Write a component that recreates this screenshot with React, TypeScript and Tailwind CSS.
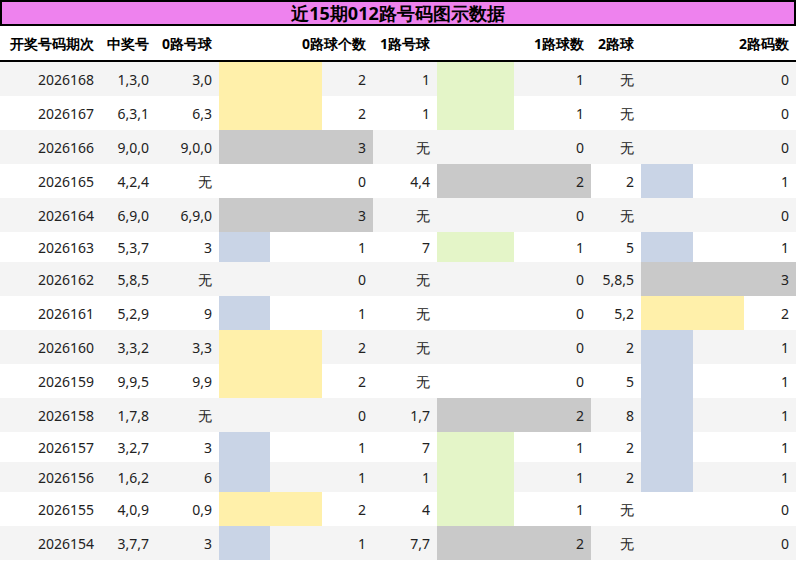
const rows: [string, string, string, number, string, number, string, number][] = [
  ["2026168", "1,3,0", "3,0", 2, "1", 1, "无", 0],
  ["2026167", "6,3,1", "6,3", 2, "1", 1, "无", 0],
  ["2026166", "9,0,0", "9,0,0", 3, "无", 0, "无", 0],
  ["2026165", "4,2,4", "无", 0, "4,4", 2, "2", 1],
  ["2026164", "6,9,0", "6,9,0", 3, "无", 0, "无", 0],
  ["2026163", "5,3,7", "3", 1, "7", 1, "5", 1],
  ["2026162", "5,8,5", "无", 0, "无", 0, "5,8,5", 3],
  ["2026161", "5,2,9", "9", 1, "无", 0, "5,2", 2],
  ["2026160", "3,3,2", "3,3", 2, "无", 0, "2", 1],
  ["2026159", "9,9,5", "9,9", 2, "无", 0, "5", 1],
  ["2026158", "1,7,8", "无", 0, "1,7", 2, "8", 1],
  ["2026157", "3,2,7", "3", 1, "7", 1, "2", 1],
  ["2026156", "1,6,2", "6", 1, "1", 1, "2", 1],
  ["2026155", "4,0,9", "0,9", 2, "4", 1, "无", 0],
  ["2026154", "3,7,7", "3", 1, "7,7", 2, "无", 0],
];

const colors0 = ["", "bg-[#c9d4e6]", "bg-[#fff0aa]", "bg-[#c9c9c9]"];
const colors1 = ["", "bg-[#e4f5c8]", "bg-[#c9c9c9]"];
const colors2 = ["", "bg-[#c9d4e6]", "bg-[#fff0aa]", "bg-[#c9c9c9]"];

function Bar({ n, max, width, colors }: { n: number; max: number; width: string; colors: string[] }) {
  return (
    <div className={`relative flex h-full items-center justify-end pr-[7px] ${width}`}>
      {n > 0 && <div className={`absolute left-0 top-0 h-full ${colors[n]}`} style={{ width: `${(n / max) * 100}%` }} />}
      <span className="relative">{n}</span>
    </div>
  );
}

function Cell({ width, children }: { width: string; children: React.ReactNode }) {
  return <div className={`flex h-full items-center justify-end pr-[7px] ${width}`}>{children}</div>;
}

export default function App() {
  return (
    <div className="w-[796px] bg-white font-['Liberation_Sans','Noto_Sans_CJK_SC',sans-serif] text-[14px] text-[#222]">
      <div className="flex h-[26px] items-center justify-center border-2 border-black bg-[#ee82ee] font-['Liberation_Serif','Noto_Sans_CJK_SC',serif] text-[18px] font-bold text-black">
        近15期012路号码图示数据
      </div>
      <div className="flex h-[36px] items-center border-b-2 border-black font-bold text-black">
        <Cell width="w-[101px]">开奖号码期次</Cell>
        <Cell width="w-[55px]">中奖号</Cell>
        <Cell width="w-[63px]">0路号球</Cell>
        <Cell width="w-[154px]">0路球个数</Cell>
        <Cell width="w-[64px]">1路号球</Cell>
        <Cell width="w-[154px]">1路球数</Cell>
        <Cell width="w-[50px]">2路球</Cell>
        <Cell width="w-[155px]">2路码数</Cell>
      </div>
      {rows.map((r, i) => {
        const tall = r.includes("无");
        return (
          <div key={r[0]} className={`flex ${tall ? "h-[34px]" : "h-[30px]"} ${i % 2 === 0 ? "bg-[#f4f4f4]" : "bg-white"}`}>
            <Cell width="w-[101px]">{r[0]}</Cell>
            <Cell width="w-[55px]">{r[1]}</Cell>
            <Cell width="w-[63px]">{r[2]}</Cell>
            <Bar n={r[3]} max={3} width="w-[154px]" colors={colors0} />
            <Cell width="w-[64px]">{r[4]}</Cell>
            <Bar n={r[5]} max={2} width="w-[154px]" colors={colors1} />
            <Cell width="w-[50px]">{r[6]}</Cell>
            <Bar n={r[7]} max={3} width="w-[155px]" colors={colors2} />
          </div>
        );
      })}
    </div>
  );
}
